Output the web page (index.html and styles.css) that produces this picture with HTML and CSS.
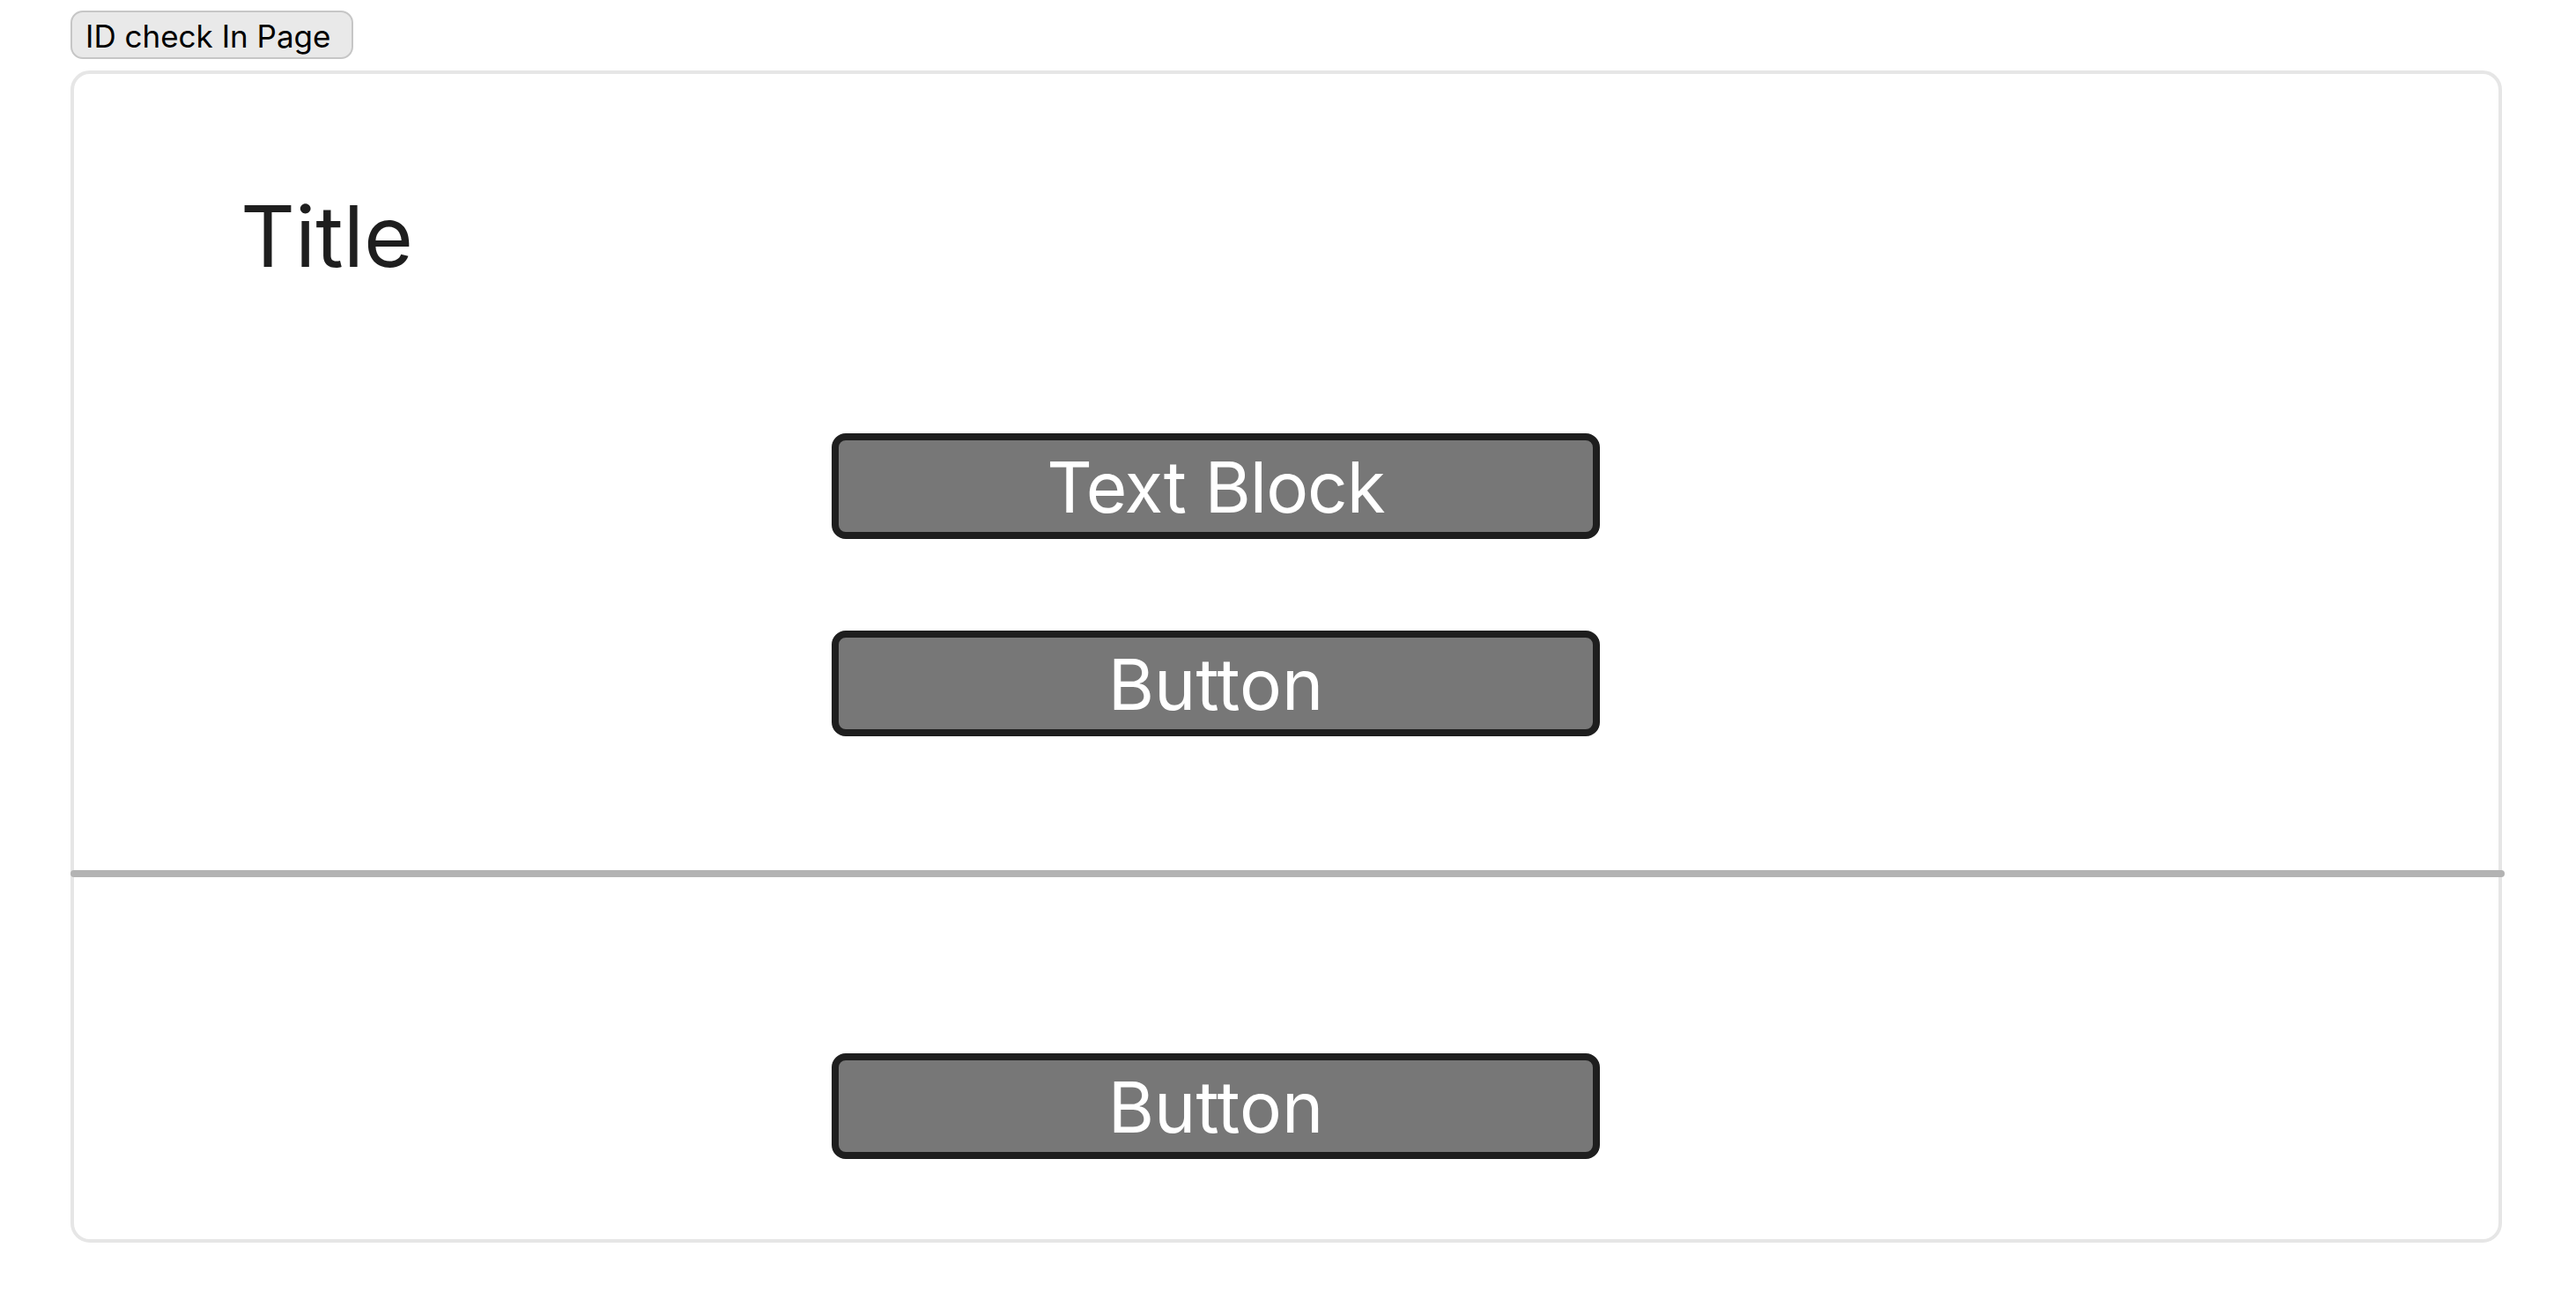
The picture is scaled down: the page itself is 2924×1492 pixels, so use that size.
FILE: index.html
```html
<!DOCTYPE html>
<html lang="en">
<head>
    <meta charset="UTF-8">
    <meta name="viewport" content="width=device-width, initial-scale=1.0">
    <title>ID check In Page</title>
    <link rel="stylesheet" href="styles.css">
</head>
<body>
    <button id="id-check">ID check In Page</button>
    <div id="page">
        <div class="section top">
            <div id="title">Title</div>
            <div class="block text-block">Text Block</div>
            <button class="block">Button</button>
        </div>
        <div class="divider"></div>
        <div class="section bottom">
            <button class="block">Button</button>
        </div>
    </div>
</body>
</html>
```

FILE: styles.css
```css
body {
    font-family: Inter, "Noto Sans", sans-serif;
    margin: 0;
    padding: 12px 84px 0 80px;
    background-color: #fff;
}
#id-check {
    display: flex;
    align-items: center;
    width: 321px;
    height: 55px;
    padding: 2px 0 0 15px;
    font-family: Inter, "Noto Sans", sans-serif;
    font-size: 35px;
    color: #000;
    background-color: #e9e9e9;
    border: 2px solid #c6c6c6;
    border-radius: 14px;
    margin-bottom: 13px;
}
#page {
    border: 4px solid #e6e6e6;
    border-radius: 22px;
    display: flex;
    flex-direction: column;
}
.section {
    display: flex;
    flex-direction: column;
}
.section.top {
    padding: 126px 0 152px;
}
.section.bottom {
    padding: 200px 0 91px;
}
#title {
    font-size: 96px;
    color: #1e1e1e;
    margin-left: 189px;
    margin-bottom: 166px;
}
.block {
    box-sizing: border-box;
    width: 872px;
    height: 120px;
    margin-left: 860px;
    display: flex;
    justify-content: center;
    align-items: center;
    padding: 0;
    font-family: Inter, "Noto Sans", sans-serif;
    font-size: 80px;
    color: #fff;
    background-color: #777;
    border: 8px solid #1e1e1e;
    border-radius: 16px;
}
.text-block {
    letter-spacing: -1px;
}
.top .block + .block {
    margin-top: 104px;
}
.divider {
    height: 8px;
    margin-left: -4px;
    width: calc(100% + 11px);
    background-color: #b3b3b3;
    border-radius: 4px;
}
```
